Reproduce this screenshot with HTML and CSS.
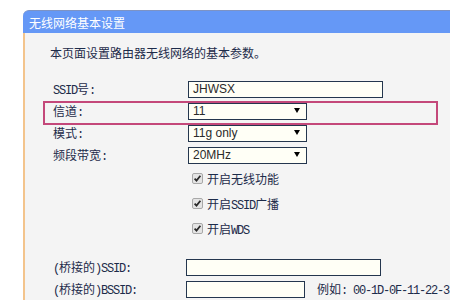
FILE: index.html
```html
<!DOCTYPE html>
<html lang="zh-CN">
<head>
  <meta charset="UTF-8" />
  <title>无线网络基本设置</title>
  <link rel="stylesheet" href="styles.css">
</head>
<body>
  <div class="page">
    <div class="panel">
      <div class="panel-head">无线网络基本设置</div>
      <div class="panel-body">
        <p class="intro">本页面设置路由器无线网络的基本参数。</p>

        <div class="form">
          <div class="row">
            <span class="label"><span class="en">SSID</span>号<span class="en">:</span></span>
            <div class="field w-long">JHWSX</div>
          </div>
          <div class="row hl">
            <span class="label">信道<span class="en">:</span></span>
            <div class="field select w-short">11<span class="arrow"></span></div>
          </div>
          <div class="row">
            <span class="label">模式<span class="en">:</span></span>
            <div class="field select w-short">11g only<span class="arrow"></span></div>
          </div>
          <div class="row">
            <span class="label">频段带宽<span class="en">:</span></span>
            <div class="field select w-short">20MHz<span class="arrow"></span></div>
          </div>

          <div class="checks">
            <div class="row check">
              <span class="label"></span>
              <span class="cb"><svg viewBox="0 0 11 11" width="11" height="11"><rect x="0.5" y="0.5" width="10" height="10" rx="1.5" fill="#e4e4e4" stroke="#a8a8a8"/><path d="M2.6 5.6 L4.5 7.6 L8.4 2.8" fill="none" stroke="#2a2a2a" stroke-width="1.8"/></svg></span>
              <span class="cb-text">开启无线功能</span>
            </div>
            <div class="row check">
              <span class="label"></span>
              <span class="cb"><svg viewBox="0 0 11 11" width="11" height="11"><rect x="0.5" y="0.5" width="10" height="10" rx="1.5" fill="#e4e4e4" stroke="#a8a8a8"/><path d="M2.6 5.6 L4.5 7.6 L8.4 2.8" fill="none" stroke="#2a2a2a" stroke-width="1.8"/></svg></span>
              <span class="cb-text">开启<span class="en">SSID</span>广播</span>
            </div>
            <div class="row check">
              <span class="label"></span>
              <span class="cb"><svg viewBox="0 0 11 11" width="11" height="11"><rect x="0.5" y="0.5" width="10" height="10" rx="1.5" fill="#e4e4e4" stroke="#a8a8a8"/><path d="M2.6 5.6 L4.5 7.6 L8.4 2.8" fill="none" stroke="#2a2a2a" stroke-width="1.8"/></svg></span>
              <span class="cb-text">开启<span class="en">WDS</span></span>
            </div>
          </div>

          <div class="bridge">
            <div class="row">
              <span class="label"><span class="en">(</span>桥接的<span class="en">)SSID:</span></span>
              <div class="field w-long nudge"></div>
            </div>
            <div class="row">
              <span class="label"><span class="en">(</span>桥接的<span class="en">)BSSID:</span></span>
              <div class="field w-short nudge"></div>
              <span class="hint">例如<span class="en">: 00-1D-0F-11-22-3</span></span>
            </div>
          </div>
        </div>
      </div>
    </div>
  </div>
</body>
</html>
```

FILE: styles.css
```css
body {
  margin: 0;
  background: #fff;
  font-family: "Noto Sans CJK SC", sans-serif;
  font-size: 12px;
  color: #1d2b4a;
  overflow: hidden;
}
.page {
  padding: 10px 0 0 23px;
}

/* Panel */
.panel-head {
  height: 23px;
  line-height: 23px;
  padding-left: 6px;
  background: #6598f6;
  border-top: 1px solid #7d93c4;
  border-top-left-radius: 6px;
  color: #fff;
  box-sizing: border-box;
}
.panel-body {
  background: #f4f4f4;
  border-left: 2px solid #f3c48c;
  padding-top: 12px;
  height: 267px;
  box-sizing: border-box;
}
.intro {
  margin: 0 0 17px 25px;
  line-height: 16px;
}

/* Form rows */
.form {
  padding-left: 28px;
}
.row {
  display: flex;
  align-items: center;
  height: 22px;
  white-space: nowrap;
}
.label {
  width: 135px;
  flex: none;
}
.en {
  font-family: "Liberation Mono", monospace;
  font-size: 12px;
  letter-spacing: -1.2px;
}
.field {
  height: 17px;
  box-sizing: border-box;
  border: 1px solid #24364e;
  background: #fffff6;
  font-family: "Liberation Sans", Arial, sans-serif;
  font-size: 12px;
  color: #2a2a2a;
  padding-left: 4px;
  display: flex;
  align-items: center;
  flex: none;
}
.w-long { width: 195px; }
.w-short { width: 119px; }
.nudge { margin-left: -2px; }

.select {
  justify-content: space-between;
  padding-right: 6px;
}
.arrow {
  width: 0;
  height: 0;
  border-left: 3px solid transparent;
  border-right: 3px solid transparent;
  border-top: 5px solid #000;
  margin-top: -1px;
}

/* Highlight annotation on the channel row */
.hl {
  position: relative;
}
.hl::after {
  content: "";
  position: absolute;
  left: -10px;
  top: 1px;
  width: 395px;
  height: 24px;
  box-sizing: border-box;
  border: 2px solid #c4487a;
}

/* Checkboxes */
.check {
  height: 25px;
}
.cb {
  margin-left: 4px;
  width: 11px;
  height: 11px;
  display: flex;
}
.cb-text {
  margin-left: 4px;
}

.bridge {
  margin-top: 15px;
}
.hint {
  margin-left: 12px;
}
```
